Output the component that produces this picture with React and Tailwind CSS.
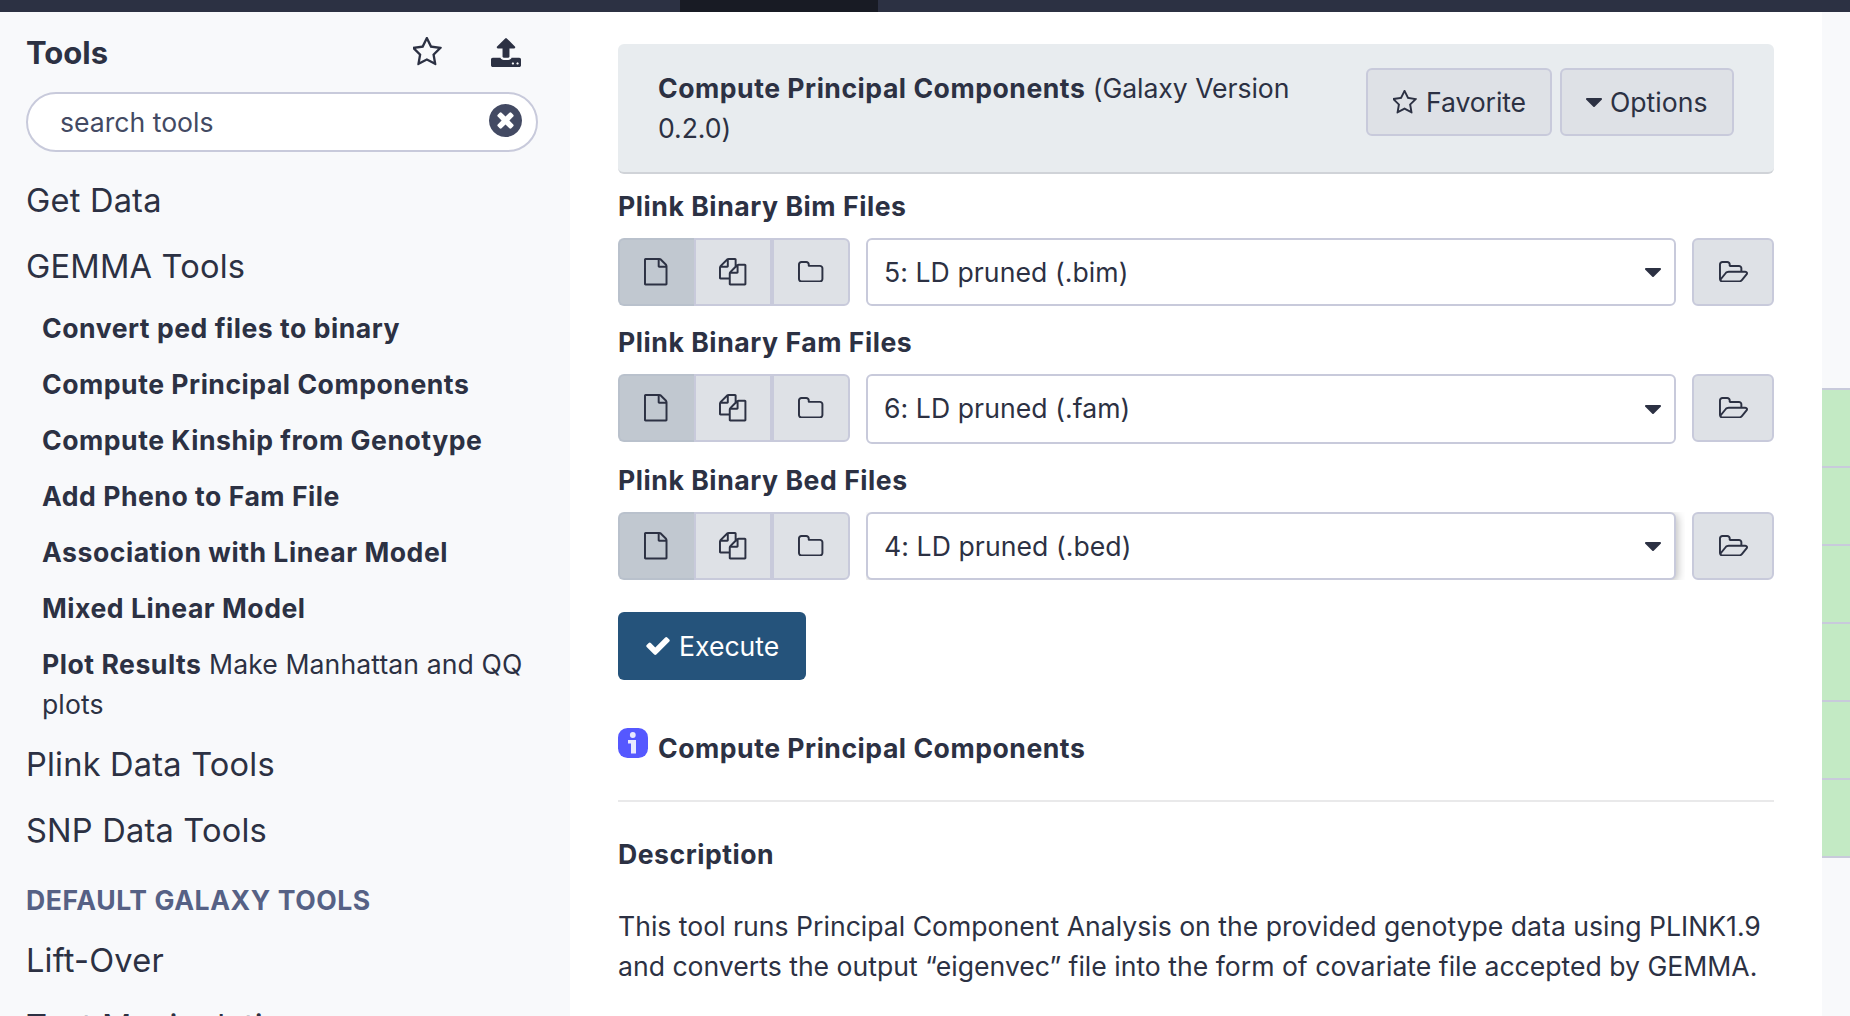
import React from "react";

const ICONS = {
  star: {
    box: "64 64 1664 1588",
    d: "M1137 1004l306-297-422-62-189-382-189 382-422 62 306 297-73 421 378-199 377 199zm527-357q0 22-26 48l-363 354 86 500q1 7 1 20 0 50-41 50-19 0-40-12l-449-236-449 236q-22 12-40 12-21 0-31.5-14.5t-10.5-35.5q0-6 2-20l86-500-364-354q-25-27-25-48 0-37 56-46l502-73 225-455q19-41 49-41t49 41l225 455 502 73q56 9 56 46z",
  },
  upload: {
    box: "64 64 1664 1600",
    d: "M1344 1472q0-26-19-45t-45-19-45 19-19 45 19 45 45 19 45-19 19-45zm256 0q0-26-19-45t-45-19-45 19-19 45 19 45 45 19 45-19 19-45zm128-224v320q0 40-28 68t-68 28h-1472q-40 0-68-28t-28-68v-320q0-40 28-68t68-28h427q21 56 70.5 92t110.5 36h256q61 0 110.5-36t70.5-92h427q40 0 68 28t28 68zm-325-648q-17 40-59 40h-256v448q0 26-19 45t-45 19h-256q-26 0-45-19t-19-45v-448h-256q-42 0-59-40-17-39 14-69l448-448q18-19 45-19t45 19l448 448q31 30 14 69z",
  },
  clear: {
    box: "128 128 1536 1536",
    d: "M1277 1122q0-26-19-45l-181-181 181-181q19-19 19-45 0-27-19-46l-90-90q-19-19-46-19-26 0-45 19l-181 181-181-181q-19-19-45-19-27 0-46 19l-90 90q-19 19-19 46 0 26 19 45l181 181-181 181q-19 19-19 45 0 27 19 46l90 90q19 19 46 19 26 0 45-19l181-181 181 181q19 19 45 19 27 0 46-19l90-90q19-19 19-46zm387-226q0 209-103 385.5t-279.5 279.5-385.5 103-385.5-103-279.5-279.5-103-385.5 103-385.5 279.5-279.5 385.5-103 385.5 103 279.5 279.5 103 385.5z",
  },
  check: {
    box: "121 334 1550 1188",
    d: "M1671 566q0 40-28 68l-724 724-136 136q-28 28-68 28t-68-28l-136-136-362-362q-28-28-28-68t28-68l136-136q28-28 68-28t68 28l294 295 656-657q28-28 68-28t68 28l136 136q28 28 28 68z",
  },
  file: {
    box: "128 0 1536 1792",
    d: "M1596 380q28 28 48 76t20 88v1152q0 40-28 68t-68 28h-1344q-40 0-68-28t-28-68v-1600q0-40 28-68t68-28h896q40 0 88 20t76 48zm-444-244v376h376q-10-29-22-41l-313-313q-12-12-41-22zm384 1528v-1024h-416q-40 0-68-28t-28-68v-416h-768v1536h1280z",
  },
  files: {
    box: "0 0 1792 1792",
    d: "M1696 384q40 0 68 28t28 68v1216q0 40-28 68t-68 28h-960q-40 0-68-28t-28-68v-288h-544q-40 0-68-28t-28-68v-672q0-40 20-88t48-76l408-408q28-28 76-48t88-20h416q40 0 68 28t28 68v328q68-40 128-40h416zm-544 213l-299 299h299v-299zm-640-384l-299 299h299v-299zm196 647l316-316v-416h-384v416q0 40-28 68t-68 28h-416v640h512v-256q0-40 20-88t48-76zm956 804v-1152h-384v416q0 40-28 68t-68 28h-416v640h896z",
  },
  folder: {
    box: "64 128 1664 1408",
    d: "M1600 1312v-704q0-40-28-68t-68-28h-704q-40 0-68-28t-28-68v-64q0-40-28-68t-68-28h-320q-40 0-68 28t-28 68v960q0 40 28 68t68 28h1216q40 0 68-28t28-68zm128-704v704q0 92-66 158t-158 66h-1216q-92 0-158-66t-66-158v-960q0-92 66-158t158-66h320q92 0 158 66t66 158v32h672q92 0 158 66t66 158z",
  },
  folderOpen: {
    box: "-64 128 1909 1408",
    d: "M1717 931q0-35-53-35h-1088q-40 0-85.5 21.5t-71.5 52.5l-294 363q-18 24-18 40 0 35 53 35h1088q40 0 86-22t71-53l294-363q18-22 18-39zm-1141-163h768v-160q0-40-28-68t-68-28h-576q-40 0-68-28t-28-68v-64q0-40-28-68t-68-28h-320q-40 0-68 28t-28 68v853l256-315q44-53 116-87.5t140-34.5zm1269 163q0 62-46 120l-295 363q-43 53-116 87.5t-140 34.5h-1088q-92 0-158-66t-66-158v-960q0-92 66-158t158-66h320q92 0 158 66t66 158v32h544q92 0 158 66t66 158v160h192q54 0 99 24.5t67 70.5q15 32 15 68z",
  },
  caret: {
    box: "384 704 1024 576",
    d: "M1408 768q0 26-19 45l-448 448q-19 19-45 19t-45-19l-448-448q-19-19-19-45t19-45 45-19h896q26 0 45 19t19 45z",
  },
};

function Icon({ name, className }) {
  return (
    <svg viewBox={ICONS[name].box} fill="currentColor" className={"block shrink-0 " + className}>
      <path d={ICONS[name].d} />
    </svg>
  );
}

const GEMMA = [
  ["Convert ped files to binary"],
  ["Compute Principal Components"],
  ["Compute Kinship from Genotype"],
  ["Add Pheno to Fam File"],
  ["Association with Linear Model"],
  ["Mixed Linear Model"],
  ["Plot Results", "Make Manhattan and QQ plots"],
];

function Section({ children }) {
  return (
    <div className="h-[66px] pl-[26px] text-[32.6px] font-[420] leading-[64px] tracking-[0.2px] whitespace-nowrap">
      {children}
    </div>
  );
}

function Sidebar() {
  return (
    <aside className="w-[570px] shrink-0 overflow-hidden bg-[#f8f9fb]">
      <div className="flex h-20 items-start pl-[26px]">
        <h2 className="mt-5 w-[387px] text-[31px] font-bold leading-[42px]">Tools</h2>
        <Icon name="star" className="mt-[25px] w-[30px] h-[29px]" />
        <Icon name="upload" className="mt-[26px] ml-12 w-[30px] h-[29px]" />
      </div>
      <div className="ml-[26px] flex h-[60px] w-[512px] items-center justify-between rounded-full border-2 border-[#c8cadb] bg-white pl-8 pr-[14px] text-[#434a63]">
        <span>search tools</span>
        <Icon name="clear" className="-mt-[3px] size-[33px]" />
      </div>
      <nav className="pt-4">
        <Section>Get Data</Section>
        <Section>GEMMA Tools</Section>
        <div>
          {GEMMA.map(([name, text]) => (
            <div key={name} className="py-2 pl-[42px] pr-10">
              <span className="font-bold tracking-[0.52px]">{name}</span>
              {text && <span className="tracking-[0.09px]"> {text}</span>}
            </div>
          ))}
        </div>
        <Section>Plink Data Tools</Section>
        <Section>SNP Data Tools</Section>
        <div className="h-16 pt-4 pl-[26px] font-bold tracking-[0.56px] text-[#566185]">DEFAULT GALAXY TOOLS</div>
        <Section>Lift-Over</Section>
        <Section>Text Manipulation</Section>
      </nav>
    </aside>
  );
}

const BTN = "flex items-center rounded-md border-2 border-[#c8cadb] bg-[#dee1e6]";

function DataField({ label, value, tall, shadow }) {
  return (
    <div>
      <div className="font-bold tracking-[0.55px]">{label}</div>
      <div className="mt-3 flex items-start">
        <div className="flex h-[68px] w-[232px]">
          <div className="flex w-[76px] items-center justify-center rounded-l-md border-2 border-r-0 border-[#b9c1cc] bg-[#c1c8d0]">
            <Icon name="file" className="mr-[2.5px] h-[27.4px] w-[23.5px]" />
          </div>
          <div className="flex w-[78px] items-center justify-center border-2 border-[#c8cadb] bg-[#dee1e6]">
            <Icon name="files" className="size-[27.4px]" />
          </div>
          <div className="flex w-[78px] items-center justify-center rounded-r-md border-2 border-[#c8cadb] bg-[#dee1e6]">
            <Icon name="folder" className="mb-px h-[21.5px] w-[25.4px]" />
          </div>
        </div>
        <div className={"ml-4 w-[826px] " + (shadow ? "[clip-path:inset(0_7px_0_0)]" : "")}>
          <div
            className={
              "flex w-[810px] items-center justify-between rounded-md border-2 border-[#c8cadb] bg-white pl-4 pr-[13px] " +
              (tall ? "h-[70px] " : "h-[68px] ") +
              (shadow ? "shadow-[2px_2px_8px_rgba(0,0,0,0.25)]" : "")
            }
          >
            <span className={"tracking-[0.07px] " + (tall ? "-mt-[2px]" : "")}>{value}</span>
            <Icon name="caret" className="mt-px h-[9px] w-4" />
          </div>
        </div>
        <div className={BTN + " h-[68px] w-[82px] justify-center"}>
          <Icon name="folderOpen" className="mb-px h-[21.5px] w-[29px]" />
        </div>
      </div>
    </div>
  );
}

function Center() {
  return (
    <main className="w-[1252px] shrink-0 overflow-hidden bg-white pt-8 pl-12 pr-12">
      <div className="flex h-[130px] w-[1156px] items-start justify-between rounded-md border-b-2 border-[#d0d3d8] bg-[#e8ecef] pt-6 pl-10 pr-10">
        <div className="w-[660px] tracking-[-0.05px]">
          <span className="font-bold tracking-[0.52px]">Compute Principal Components</span> (Galaxy Version 0.2.0)
        </div>
        <div className="flex gap-2">
          <div className={BTN + " h-[68px] w-[186px] pl-[25px]"}>
            <Icon name="star" className="h-[24px] w-[25px]" />
            <span className="ml-2 tracking-[-0.1px]">Favorite</span>
          </div>
          <div className={BTN + " h-[68px] w-[174px] pl-6"}>
            <Icon name="caret" className="h-[9px] w-4" />
            <span className="ml-2">Options</span>
          </div>
        </div>
      </div>
      <div className="mt-3 flex flex-col gap-4">
        <DataField label="Plink Binary Bim Files" value="5: LD pruned (.bim)" />
        <DataField label="Plink Binary Fam Files" value="6: LD pruned (.fam)" tall />
        <DataField label="Plink Binary Bed Files" value="4: LD pruned (.bed)" shadow />
      </div>
      <div className="mt-8 flex h-[68px] w-[188px] items-center rounded-md bg-[#25537b] pl-7 text-white">
        <Icon name="check" className="h-[18px] w-6" />
        <span className="ml-[9px]">Execute</span>
      </div>
      <div className="mt-12 flex">
        <svg viewBox="0 0 30 30" className="size-[30px]">
          <rect width="30" height="30" rx="9.5" fill="#5558ff" />
          <circle cx="14.8" cy="7" r="2.9" fill="#e9e9ff" />
          <path d="M10 12h8v13.500h-5V15.500h-3z" fill="#e9e9ff" />
        </svg>
        <h3 className="ml-[10px] font-bold tracking-[0.52px]">Compute Principal Components</h3>
      </div>
      <hr className="mt-8 border-t-2 border-[#e9e9ea]" />
      <h3 className="mt-8 font-bold tracking-[0.52px]">Description</h3>
      <p className="mt-8 w-[1170px]">
        This tool runs Principal Component Analysis on the provided genotype data using PLINK1.9 and converts the output
        “eigenvec” file into the form of covariate file accepted by GEMMA.
      </p>
    </main>
  );
}

export default function App() {
  return (
    <div className="flex h-[1016px] w-[1850px] flex-col overflow-hidden font-['Inter',sans-serif] text-[26.6px] leading-10 text-[#2c3143]">
      <header className="flex h-3 shrink-0 bg-[#2c3143] pl-[680px]">
        <div className="w-[198px] bg-[#181b24]" />
      </header>
      <div className="flex min-h-0 flex-1">
        <Sidebar />
        <Center />
        <aside className="flex-1 bg-[#f8f9fb] pt-[376px]">
          <div className="border-t-2 border-[#c8cadb]">
            {[0, 1, 2, 3, 4, 5].map((n) => (
              <div key={n} className="h-[78px] border-b-2 border-[#c8cadb] bg-[#c3eac4]" />
            ))}
          </div>
        </aside>
      </div>
    </div>
  );
}
